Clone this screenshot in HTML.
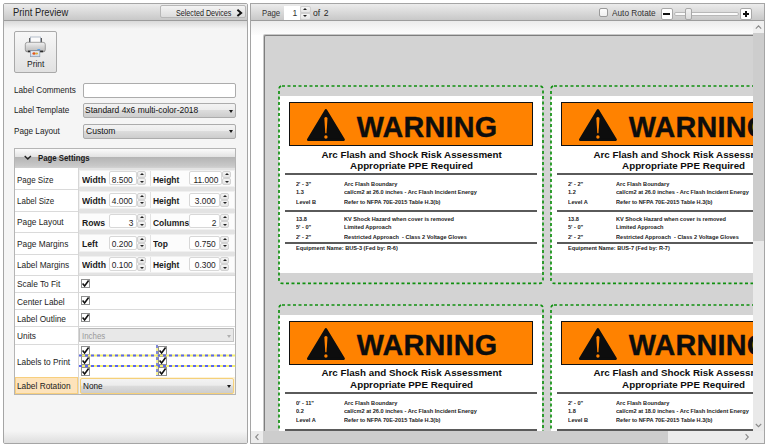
<!DOCTYPE html>
<html><head><meta charset="utf-8">
<style>
*{box-sizing:border-box;margin:0;padding:0}
html,body{width:768px;height:448px;overflow:hidden;background:#fff;font-family:"Liberation Sans",sans-serif;color:#1e1e1e;position:relative}
.a{position:absolute}
.t{position:absolute;white-space:pre;line-height:1}
.combo{position:absolute;border:1px solid #acacac;border-radius:2px;background:linear-gradient(#f3f3f3 0%,#ececec 45%,#dcdcdc 50%,#cdcdcd 100%)}
.arr{position:absolute;width:0;height:0;border-left:2px solid transparent;border-right:2px solid transparent;border-top:3px solid #1a1a1a}
.cb{position:absolute;width:9px;height:9px;border:1px solid #8e8f8f;background:#fff}
.spin{position:absolute;width:9px;border:1px solid #d2d2d2;border-radius:2px;background:linear-gradient(#f4f4f4,#e4e4e4)}
.inp{position:absolute;border:1px solid #d8d8d8;border-radius:2px;background:#fff}
</style></head><body>
<div class="a" style="left:3px;top:3px;width:245px;height:441px;border:1px solid #a5a5a5;border-radius:2px;background:#f5f5f5"></div>
<div class="a" style="left:4px;top:4px;width:243px;height:17px;background:linear-gradient(#ececec,#c8c8c8);border-bottom:1px solid #9c9c9c"></div>
<div class="a" style="left:4px;top:21px;width:243px;height:8px;background:linear-gradient(#d9d9d9,#f5f5f5)"></div>
<div class="a" style="left:4px;top:431px;width:243px;height:12px;background:linear-gradient(#f5f5f5,#dedede)"></div>
<div class="t" style="left:12.90px;top:7.97px;font-size:10.2px;font-weight:normal;color:#222;transform:scaleX(0.92);transform-origin:0 0;">Print Preview</div>
<div class="a" style="left:160px;top:5px;width:86px;height:13px;border:1px solid #b7b7b7;border-radius:2px;background:linear-gradient(#f4f4f4,#dcdcdc)"></div>
<div class="t" style="left:175.60px;top:7.56px;font-size:9.5px;font-weight:normal;color:#1c1c1c;transform:scaleX(0.755);transform-origin:0 0;">Selected Devices</div>
<svg class="a" style="left:235.5px;top:9px" width="7" height="8"><path d="M1.4 0.7 L5.2 3.9 L1.4 7.1" fill="none" stroke="#111" stroke-width="1.9"/></svg>
<div class="a" style="left:14px;top:31px;width:43px;height:42px;border:1px solid #a9a9a9;border-radius:2px;background:linear-gradient(#f7f7f7,#e1e1e1)"></div>
<svg class="a" style="left:22px;top:34px" width="28" height="26" viewBox="0 0 28 26">
<defs><linearGradient id="pb" x1="0" y1="0" x2="0" y2="1"><stop offset="0" stop-color="#f2f2f2"/><stop offset="0.45" stop-color="#d6d6d6"/><stop offset="0.8" stop-color="#c4c4c4"/><stop offset="1" stop-color="#8a8a8a"/></linearGradient>
<linearGradient id="po" x1="0" y1="0" x2="0" y2="1"><stop offset="0" stop-color="#eef3fa"/><stop offset="1" stop-color="#c9d6e8"/></linearGradient></defs>
<rect x="7" y="4" width="13" height="8" fill="#5a5a5a"/>
<rect x="8.3" y="3" width="10.2" height="7" fill="#fbfbfb" stroke="#9aa6b8" stroke-width="0.7"/>
<rect x="3.3" y="8.3" width="20" height="9.6" rx="2.2" fill="url(#pb)" stroke="#7e7e7e" stroke-width="0.7"/>
<rect x="6" y="16.6" width="15" height="1.6" fill="#2a2a2a"/>
<rect x="15.4" y="15.1" width="2.8" height="1" fill="#4f9be6"/>
<rect x="8.4" y="16.8" width="9.4" height="5.9" fill="url(#po)" stroke="#8797ad" stroke-width="0.7"/>
<ellipse cx="12" cy="19.5" rx="1.6" ry="1.2" fill="#e2541c"/><ellipse cx="14.6" cy="19.5" rx="1.5" ry="1.1" fill="#d8b040"/>
</svg>
<div class="t" style="left:26.80px;top:60.31px;font-size:9.2px;font-weight:normal;color:#1c1c1c;transform:scaleX(0.92);transform-origin:0 0;">Print</div>
<div class="t" style="left:13.90px;top:84.96px;font-size:9.5px;font-weight:normal;color:#1c1c1c;transform:scaleX(0.86);transform-origin:0 0;">Label Comments</div>
<div class="a" style="left:83px;top:83px;width:153px;height:15px;border:1px solid #acacac;border-radius:2px;background:#fff"></div>
<div class="t" style="left:13.90px;top:105.46px;font-size:9.5px;font-weight:normal;color:#1c1c1c;transform:scaleX(0.86);transform-origin:0 0;">Label Template</div>
<div class="combo" style="left:83px;top:103px;width:153px;height:15px"></div>
<div class="t" style="left:85.30px;top:105.46px;font-size:9.5px;font-weight:normal;color:#111;transform:scaleX(0.89);transform-origin:0 0;">Standard 4x6 multi-color-2018</div>
<div class="arr" style="left:228.5px;top:109.5px"></div>
<div class="t" style="left:13.90px;top:125.96px;font-size:9.5px;font-weight:normal;color:#1c1c1c;transform:scaleX(0.86);transform-origin:0 0;">Page Layout</div>
<div class="combo" style="left:83px;top:123.5px;width:153px;height:15px"></div>
<div class="t" style="left:85.80px;top:125.96px;font-size:9.5px;font-weight:normal;color:#111;transform:scaleX(0.9);transform-origin:0 0;">Custom</div>
<div class="arr" style="left:228.5px;top:130px"></div>
<div class="a" style="left:14px;top:148px;width:222px;height:247px;border:1px solid #b5b5b5;background:#fff"></div>
<div class="a" style="left:15px;top:149px;width:220px;height:8px;background:linear-gradient(#fbfbfb,#e2e2e2)"></div>
<div class="a" style="left:15px;top:157px;width:220px;height:11px;background:linear-gradient(#b4b4b4,#c8c8c8 80%,#d2d2d2)"></div>
<svg class="a" style="left:24px;top:155px" width="8" height="6"><path d="M0.7 0.9 L3.8 4 L6.9 0.9" fill="none" stroke="#222" stroke-width="1.35"/></svg>
<div class="t" style="left:38.00px;top:152.76px;font-size:9.5px;font-weight:bold;color:#1a1a1a;transform:scaleX(0.82);transform-origin:0 0;">Page Settings</div>
<div class="a" style="left:78px;top:168px;width:1px;height:226px;background:#d6d6d6"></div>
<div class="a" style="left:15px;top:189.0px;width:63px;height:1.0px;background:#dadada"></div>
<div class="a" style="left:15px;top:210.5px;width:63px;height:1.0px;background:#dadada"></div>
<div class="a" style="left:15px;top:232.0px;width:63px;height:1.0px;background:#dadada"></div>
<div class="a" style="left:15px;top:253.5px;width:63px;height:1.0px;background:#dadada"></div>
<div class="a" style="left:15px;top:274.5px;width:63px;height:1.0px;background:#dadada"></div>
<div class="a" style="left:15px;top:291.5px;width:63px;height:1.0px;background:#dadada"></div>
<div class="a" style="left:15px;top:308.5px;width:63px;height:1.0px;background:#dadada"></div>
<div class="a" style="left:15px;top:325.8px;width:63px;height:1.0px;background:#dadada"></div>
<div class="a" style="left:15px;top:343.5px;width:63px;height:1.0px;background:#dadada"></div>
<div class="a" style="left:15px;top:376.5px;width:63px;height:1.0px;background:#dadada"></div>
<div class="t" style="left:17.00px;top:174.66px;font-size:9.5px;font-weight:normal;color:#1c1c1c;transform:scaleX(0.84);transform-origin:0 0;">Page Size</div>
<div class="t" style="left:17.00px;top:195.96px;font-size:9.5px;font-weight:normal;color:#1c1c1c;transform:scaleX(0.84);transform-origin:0 0;">Label Size</div>
<div class="t" style="left:17.00px;top:217.46px;font-size:9.5px;font-weight:normal;color:#1c1c1c;transform:scaleX(0.875);transform-origin:0 0;">Page Layout</div>
<div class="t" style="left:17.00px;top:238.86px;font-size:9.5px;font-weight:normal;color:#1c1c1c;transform:scaleX(0.875);transform-origin:0 0;">Page Margins</div>
<div class="t" style="left:17.00px;top:260.16px;font-size:9.5px;font-weight:normal;color:#1c1c1c;transform:scaleX(0.875);transform-origin:0 0;">Label Margins</div>
<div class="t" style="left:17.00px;top:279.26px;font-size:9.5px;font-weight:normal;color:#1c1c1c;transform:scaleX(0.875);transform-origin:0 0;">Scale To Fit</div>
<div class="t" style="left:17.00px;top:296.56px;font-size:9.5px;font-weight:normal;color:#1c1c1c;transform:scaleX(0.875);transform-origin:0 0;">Center Label</div>
<div class="t" style="left:17.00px;top:313.56px;font-size:9.5px;font-weight:normal;color:#1c1c1c;transform:scaleX(0.875);transform-origin:0 0;">Label Outline</div>
<div class="t" style="left:17.00px;top:331.16px;font-size:9.5px;font-weight:normal;color:#1c1c1c;transform:scaleX(0.875);transform-origin:0 0;">Units</div>
<div class="t" style="left:17.00px;top:356.96px;font-size:9.5px;font-weight:normal;color:#1c1c1c;transform:scaleX(0.875);transform-origin:0 0;">Labels to Print</div>
<div class="t" style="left:17.00px;top:381.56px;font-size:9.5px;font-weight:normal;color:#1c1c1c;transform:scaleX(0.875);transform-origin:0 0;">Label Rotation</div>
<div class="a" style="left:79px;top:168px;width:156px;height:21.5px;background:#e3e3e3"></div>
<div class="a" style="left:79px;top:169.5px;width:156px;height:17.5px;background:#fcfcfc;border:1px solid #f0f0f0"></div>
<div class="a" style="left:150px;top:170.5px;width:1px;height:15.5px;background:#e2e2e2"></div>
<div class="t" style="left:82.00px;top:174.76px;font-size:9.5px;font-weight:bold;color:#1a1a1a;transform:scaleX(0.91);transform-origin:0 0;">Width</div>
<div class="t" style="left:153.20px;top:174.76px;font-size:9.5px;font-weight:bold;color:#1a1a1a;transform:scaleX(0.89);transform-origin:0 0;">Height</div>
<div class="inp" style="left:108.5px;top:171.2px;width:28.5px;height:14.0px"></div>
<div class="t" style="right:634.80px;top:174.76px;font-size:9.5px;font-weight:normal;color:#1c1c1c;transform:scaleX(0.88);transform-origin:100% 0;">8.500</div>
<div class="inp" style="left:188.5px;top:171.2px;width:33.0px;height:14.0px"></div>
<div class="t" style="right:550.10px;top:174.76px;font-size:9.5px;font-weight:normal;color:#1c1c1c;transform:scaleX(0.88);transform-origin:100% 0;">11.000</div>
<div class="spin" style="left:137px;top:171.2px;height:7.0px"></div>
<div class="spin" style="left:137px;top:178.2px;height:7.0px"></div>
<div class="arr" style="left:139.5px;top:173.39999999999998px;border-top:none;border-bottom:2px solid #222"></div>
<div class="arr" style="left:139.5px;top:180.79999999999998px;border-top:2px solid #222"></div>
<div class="spin" style="left:222.0px;top:171.2px;height:7.0px"></div>
<div class="spin" style="left:222.0px;top:178.2px;height:7.0px"></div>
<div class="arr" style="left:224.5px;top:173.39999999999998px;border-top:none;border-bottom:2px solid #222"></div>
<div class="arr" style="left:224.5px;top:180.79999999999998px;border-top:2px solid #222"></div>
<div class="a" style="left:79px;top:189.5px;width:156px;height:21.5px;background:#e3e3e3"></div>
<div class="a" style="left:79px;top:191.0px;width:156px;height:17.5px;background:#fcfcfc;border:1px solid #f0f0f0"></div>
<div class="a" style="left:150px;top:192.0px;width:1px;height:15.5px;background:#e2e2e2"></div>
<div class="t" style="left:82.00px;top:196.06px;font-size:9.5px;font-weight:bold;color:#1a1a1a;transform:scaleX(0.91);transform-origin:0 0;">Width</div>
<div class="t" style="left:153.20px;top:196.06px;font-size:9.5px;font-weight:bold;color:#1a1a1a;transform:scaleX(0.89);transform-origin:0 0;">Height</div>
<div class="inp" style="left:108.5px;top:192.7px;width:28.5px;height:14.0px"></div>
<div class="t" style="right:634.80px;top:196.06px;font-size:9.5px;font-weight:normal;color:#1c1c1c;transform:scaleX(0.88);transform-origin:100% 0;">4.000</div>
<div class="inp" style="left:188.5px;top:192.7px;width:31.0px;height:14.0px"></div>
<div class="t" style="right:552.10px;top:196.06px;font-size:9.5px;font-weight:normal;color:#1c1c1c;transform:scaleX(0.88);transform-origin:100% 0;">3.000</div>
<div class="spin" style="left:137px;top:192.7px;height:7.0px"></div>
<div class="spin" style="left:137px;top:199.7px;height:7.0px"></div>
<div class="arr" style="left:139.5px;top:194.89999999999998px;border-top:none;border-bottom:2px solid #222"></div>
<div class="arr" style="left:139.5px;top:202.29999999999998px;border-top:2px solid #222"></div>
<div class="spin" style="left:220.0px;top:192.7px;height:7.0px"></div>
<div class="spin" style="left:220.0px;top:199.7px;height:7.0px"></div>
<div class="arr" style="left:222.5px;top:194.89999999999998px;border-top:none;border-bottom:2px solid #222"></div>
<div class="arr" style="left:222.5px;top:202.29999999999998px;border-top:2px solid #222"></div>
<div class="a" style="left:79px;top:211px;width:156px;height:21.5px;background:#e3e3e3"></div>
<div class="a" style="left:79px;top:212.5px;width:156px;height:17.5px;background:#fcfcfc;border:1px solid #f0f0f0"></div>
<div class="a" style="left:150px;top:213.5px;width:1px;height:15.5px;background:#e2e2e2"></div>
<div class="t" style="left:82.00px;top:217.56px;font-size:9.5px;font-weight:bold;color:#1a1a1a;transform:scaleX(0.91);transform-origin:0 0;">Rows</div>
<div class="t" style="left:153.20px;top:217.56px;font-size:9.5px;font-weight:bold;color:#1a1a1a;transform:scaleX(0.89);transform-origin:0 0;">Columns</div>
<div class="inp" style="left:108.5px;top:214.2px;width:28.5px;height:14.0px"></div>
<div class="t" style="right:634.80px;top:217.56px;font-size:9.5px;font-weight:normal;color:#1c1c1c;transform:scaleX(0.88);transform-origin:100% 0;">3</div>
<div class="inp" style="left:188.5px;top:214.2px;width:31.0px;height:14.0px"></div>
<div class="t" style="right:552.10px;top:217.56px;font-size:9.5px;font-weight:normal;color:#1c1c1c;transform:scaleX(0.88);transform-origin:100% 0;">2</div>
<div class="spin" style="left:137px;top:214.2px;height:7.0px"></div>
<div class="spin" style="left:137px;top:221.2px;height:7.0px"></div>
<div class="arr" style="left:139.5px;top:216.39999999999998px;border-top:none;border-bottom:2px solid #222"></div>
<div class="arr" style="left:139.5px;top:223.79999999999998px;border-top:2px solid #222"></div>
<div class="spin" style="left:220.0px;top:214.2px;height:7.0px"></div>
<div class="spin" style="left:220.0px;top:221.2px;height:7.0px"></div>
<div class="arr" style="left:222.5px;top:216.39999999999998px;border-top:none;border-bottom:2px solid #222"></div>
<div class="arr" style="left:222.5px;top:223.79999999999998px;border-top:2px solid #222"></div>
<div class="a" style="left:79px;top:232.5px;width:156px;height:21.5px;background:#e3e3e3"></div>
<div class="a" style="left:79px;top:234.0px;width:156px;height:17.5px;background:#fcfcfc;border:1px solid #f0f0f0"></div>
<div class="a" style="left:150px;top:235.0px;width:1px;height:15.5px;background:#e2e2e2"></div>
<div class="t" style="left:82.00px;top:238.96px;font-size:9.5px;font-weight:bold;color:#1a1a1a;transform:scaleX(0.91);transform-origin:0 0;">Left</div>
<div class="t" style="left:153.20px;top:238.96px;font-size:9.5px;font-weight:bold;color:#1a1a1a;transform:scaleX(0.89);transform-origin:0 0;">Top</div>
<div class="inp" style="left:108.5px;top:235.7px;width:28.5px;height:14.0px"></div>
<div class="t" style="right:634.80px;top:238.96px;font-size:9.5px;font-weight:normal;color:#1c1c1c;transform:scaleX(0.88);transform-origin:100% 0;">0.200</div>
<div class="inp" style="left:188.5px;top:235.7px;width:31.0px;height:14.0px"></div>
<div class="t" style="right:552.10px;top:238.96px;font-size:9.5px;font-weight:normal;color:#1c1c1c;transform:scaleX(0.88);transform-origin:100% 0;">0.750</div>
<div class="spin" style="left:137px;top:235.7px;height:7.0px"></div>
<div class="spin" style="left:137px;top:242.7px;height:7.0px"></div>
<div class="arr" style="left:139.5px;top:237.89999999999998px;border-top:none;border-bottom:2px solid #222"></div>
<div class="arr" style="left:139.5px;top:245.29999999999998px;border-top:2px solid #222"></div>
<div class="spin" style="left:220.0px;top:235.7px;height:7.0px"></div>
<div class="spin" style="left:220.0px;top:242.7px;height:7.0px"></div>
<div class="arr" style="left:222.5px;top:237.89999999999998px;border-top:none;border-bottom:2px solid #222"></div>
<div class="arr" style="left:222.5px;top:245.29999999999998px;border-top:2px solid #222"></div>
<div class="a" style="left:79px;top:254px;width:156px;height:21px;background:#e3e3e3"></div>
<div class="a" style="left:79px;top:255.5px;width:156px;height:17.0px;background:#fcfcfc;border:1px solid #f0f0f0"></div>
<div class="a" style="left:150px;top:256.5px;width:1px;height:15.0px;background:#e2e2e2"></div>
<div class="t" style="left:82.00px;top:260.26px;font-size:9.5px;font-weight:bold;color:#1a1a1a;transform:scaleX(0.91);transform-origin:0 0;">Width</div>
<div class="t" style="left:153.20px;top:260.26px;font-size:9.5px;font-weight:bold;color:#1a1a1a;transform:scaleX(0.89);transform-origin:0 0;">Height</div>
<div class="inp" style="left:108.5px;top:257.2px;width:28.5px;height:13.5px"></div>
<div class="t" style="right:634.80px;top:260.26px;font-size:9.5px;font-weight:normal;color:#1c1c1c;transform:scaleX(0.88);transform-origin:100% 0;">0.100</div>
<div class="inp" style="left:188.5px;top:257.2px;width:31.0px;height:13.5px"></div>
<div class="t" style="right:552.10px;top:260.26px;font-size:9.5px;font-weight:normal;color:#1c1c1c;transform:scaleX(0.88);transform-origin:100% 0;">0.300</div>
<div class="spin" style="left:137px;top:257.2px;height:6.75px"></div>
<div class="spin" style="left:137px;top:263.95px;height:6.75px"></div>
<div class="arr" style="left:139.5px;top:259.4px;border-top:none;border-bottom:2px solid #222"></div>
<div class="arr" style="left:139.5px;top:266.55px;border-top:2px solid #222"></div>
<div class="spin" style="left:220.0px;top:257.2px;height:6.75px"></div>
<div class="spin" style="left:220.0px;top:263.95px;height:6.75px"></div>
<div class="arr" style="left:222.5px;top:259.4px;border-top:none;border-bottom:2px solid #222"></div>
<div class="arr" style="left:222.5px;top:266.55px;border-top:2px solid #222"></div>
<div class="a" style="left:79px;top:274.5px;width:156px;height:1.0px;background:#dadada"></div>
<div class="cb" style="left:81px;top:279px"></div>
<svg class="a" style="left:81px;top:279px" width="9" height="9"><path d="M1.6 4.6 L3.6 7 L7.6 1.6" fill="none" stroke="#111" stroke-width="1.6"/></svg>
<div class="a" style="left:79px;top:291.5px;width:156px;height:1.0px;background:#dadada"></div>
<div class="cb" style="left:81px;top:296px"></div>
<svg class="a" style="left:81px;top:296px" width="9" height="9"><path d="M1.6 4.6 L3.6 7 L7.6 1.6" fill="none" stroke="#111" stroke-width="1.6"/></svg>
<div class="a" style="left:79px;top:308.5px;width:156px;height:1.0px;background:#dadada"></div>
<div class="cb" style="left:81px;top:313px"></div>
<svg class="a" style="left:81px;top:313px" width="9" height="9"><path d="M1.6 4.6 L3.6 7 L7.6 1.6" fill="none" stroke="#111" stroke-width="1.6"/></svg>
<div class="a" style="left:79px;top:325.8px;width:156px;height:1.0px;background:#dadada"></div>
<div class="a" style="left:79px;top:327.6px;width:155px;height:14.899999999999977px;border:1px solid #c2c2c2;border-top-color:#b8b8b8;border-radius:1px;background:#e8e8e8"></div>
<div class="t" style="left:81.80px;top:330.96px;font-size:9.5px;font-weight:normal;color:#9a9a9a;transform:scaleX(0.83);transform-origin:0 0;">Inches</div>
<div class="arr" style="left:227px;top:335px;border-top-color:#b0b0b0"></div>
<div class="a" style="left:79px;top:343.5px;width:156px;height:1.5px;background:#dedede"></div>
<div class="cb" style="left:80.5px;top:345.6px"></div>
<svg class="a" style="left:80.5px;top:345.6px" width="9" height="9"><path d="M1.6 4.6 L3.6 7 L7.6 1.6" fill="none" stroke="#111" stroke-width="1.6"/></svg>
<div class="cb" style="left:80.5px;top:356.1px"></div>
<svg class="a" style="left:80.5px;top:356.1px" width="9" height="9"><path d="M1.6 4.6 L3.6 7 L7.6 1.6" fill="none" stroke="#111" stroke-width="1.6"/></svg>
<div class="cb" style="left:80.5px;top:366.7px"></div>
<svg class="a" style="left:80.5px;top:366.7px" width="9" height="9"><path d="M1.6 4.6 L3.6 7 L7.6 1.6" fill="none" stroke="#111" stroke-width="1.6"/></svg>
<div class="cb" style="left:157.6px;top:345.6px"></div>
<svg class="a" style="left:157.6px;top:345.6px" width="9" height="9"><path d="M1.6 4.6 L3.6 7 L7.6 1.6" fill="none" stroke="#111" stroke-width="1.6"/></svg>
<div class="cb" style="left:157.6px;top:356.1px"></div>
<svg class="a" style="left:157.6px;top:356.1px" width="9" height="9"><path d="M1.6 4.6 L3.6 7 L7.6 1.6" fill="none" stroke="#111" stroke-width="1.6"/></svg>
<div class="cb" style="left:157.6px;top:366.7px"></div>
<svg class="a" style="left:157.6px;top:366.7px" width="9" height="9"><path d="M1.6 4.6 L3.6 7 L7.6 1.6" fill="none" stroke="#111" stroke-width="1.6"/></svg>
<svg class="a" style="left:79px;top:344px" width="156" height="33"><path d="M0 11.4 H156 M0 21.9 H156" stroke="#f2ee70" stroke-width="2"/><path d="M0 11.4 H156 M0 21.9 H156" stroke="#5a66f0" stroke-width="2" stroke-dasharray="3 3"/><path d="M78 1 V32" stroke="#f2ee70" stroke-width="1.5"/><path d="M78 1 V32" stroke="#5a66f0" stroke-width="1.5" stroke-dasharray="3 3"/></svg>
<div class="a" style="left:15px;top:377px;width:63px;height:17px;background:#fde3bb;border:1px solid #f7cf7e"></div>
<div class="a" style="left:79px;top:377px;width:156px;height:17px;background:#fdf3d9"></div>
<div class="combo" style="left:79.5px;top:378px;width:154.5px;height:15.5px;border-color:#f5d07a"></div>
<div class="t" style="left:17.00px;top:381.26px;font-size:9.5px;font-weight:normal;color:#1c1c1c;transform:scaleX(0.875);transform-origin:0 0;">Label Rotation</div>
<div class="t" style="left:82.50px;top:381.26px;font-size:9.5px;font-weight:normal;color:#111;transform:scaleX(0.86);transform-origin:0 0;">None</div>
<div class="arr" style="left:227px;top:385px"></div>
<div class="a" style="left:250px;top:3px;width:515px;height:441px;border:1px solid #a5a5a5;background:#fff"></div>
<div class="a" style="left:251px;top:4px;width:513px;height:17px;background:linear-gradient(#ececec,#c8c8c8);border-bottom:1px solid #9c9c9c"></div>
<div class="t" style="left:262.30px;top:7.96px;font-size:9.5px;font-weight:normal;color:#333;transform:scaleX(0.82);transform-origin:0 0;">Page</div>
<div class="a" style="left:283.7px;top:6.2px;width:16.30000000000001px;height:13.8px;background:#fff"></div>
<div class="t" style="right:471.00px;top:7.96px;font-size:9.5px;font-weight:normal;color:#333;transform:scaleX(0.9);transform-origin:100% 0;">1</div>
<div class="a" style="left:300px;top:6.2px;width:10.5px;height:6.8px;border:1px solid #d0d0d0;border-radius:2px;background:linear-gradient(#f6f6f6,#e6e6e6)"></div>
<div class="arr" style="left:303px;top:8.4px;border-top:none;border-bottom:2px solid #222"></div>
<div class="a" style="left:300px;top:13px;width:10.5px;height:7px;border:1px solid #d0d0d0;border-radius:2px;background:linear-gradient(#f6f6f6,#e6e6e6)"></div>
<div class="arr" style="left:303px;top:15.4px;border-top:2px solid #222"></div>
<div class="t" style="left:313.00px;top:7.96px;font-size:9.5px;font-weight:normal;color:#222;transform:scaleX(0.9);transform-origin:0 0;word-spacing:1.5px">of 2</div>
<div class="a" style="left:598.7px;top:8px;width:9.799999999999955px;height:9.3px;border:1px solid #9a9a9a;border-radius:2px;background:linear-gradient(#fdfdfd,#f0f0f0)"></div>
<div class="t" style="left:611.50px;top:7.96px;font-size:9.5px;font-weight:normal;color:#333;transform:scaleX(0.87);transform-origin:0 0;">Auto Rotate</div>
<div class="a" style="left:660.5px;top:7.5px;width:12.0px;height:12.5px;border:1px solid #a8a8a8;border-radius:2px;background:#fff"></div>
<div class="a" style="left:663px;top:13.2px;width:7px;height:1.6000000000000014px;background:#111"></div>
<div class="a" style="left:674px;top:11.8px;width:64.5px;height:4.0px;border:1px solid #b8b8b8;border-radius:2px;background:#fafafa"></div>
<div class="a" style="left:684.5px;top:7.5px;width:7.0px;height:12.5px;border:1px solid #a8a8a8;border-radius:2px;background:linear-gradient(#f2f2f2,#dcdcdc)"></div>
<div class="a" style="left:740px;top:7.7px;width:12px;height:12.3px;border:1px solid #a8a8a8;border-radius:2px;background:#fff"></div>
<div class="a" style="left:742.6px;top:13.2px;width:6.7999999999999545px;height:1.6000000000000014px;background:#111"></div>
<div class="a" style="left:745.2px;top:10.6px;width:1.599999999999909px;height:6.799999999999999px;background:#111"></div>
<div class="a" style="left:251px;top:21px;width:502px;height:410px;overflow:hidden;background:#fff">
<div class="a" style="left:0;top:0;width:502px;height:14px;background:linear-gradient(#ebebeb,#f6f6f6 50%,#fdfdfd)"></div>
<div class="a" style="left:13px;top:14px;width:560px;height:740px;background:#d3d3d3;border-left:1px solid #7d7d7d;border-top:1px solid #7d7d7d;border-radius:2px 0 0 0;box-shadow:-1px -1px 0 #c8c8c8"></div>
<div class="a" style="left:28.100000000000023px;top:65.25px;width:270px;height:200px">
<div class="a" style="left:0;top:10px;width:263px;height:176.85px;background:#fff"></div>
<svg class="a" style="left:-2px;top:-2px;overflow:visible" width="268" height="202"><rect x="2" y="2" width="264" height="197.3" rx="3" fill="none" stroke="#109010" stroke-width="1.7" stroke-dasharray="3 2.5"/></svg>
<div class="a" style="left:10.25px;top:15.75px;width:243.25px;height:43.75px;background:#ff8200;border:1.9px solid #111"></div>
<svg class="a" style="left:26px;top:21px" width="42" height="36" viewBox="0 0 42 36"><path d="M20.9 3.3 L38.6 32.7 L3.3 32.7 Z" fill="#0d0d0d" stroke="#0d0d0d" stroke-width="2.6" stroke-linejoin="round"/><path d="M19.3 10.9 Q20.9 8.9 22.5 10.9 L21.5 26.2 L20.3 26.2 Z" fill="#ff8200"/><circle cx="20.9" cy="30" r="1.7" fill="#ff8200"/></svg>
<div class="t" style="left:77.6px;top:26.42px;font-size:28.8px;font-weight:bold;color:#0d0d0d;letter-spacing:0.22px;-webkit-text-stroke:0.35px #0d0d0d;transform-origin:0 0">WARNING</div>
<div class="t" style="left:1px;width:263px;text-align:center;top:63.35px;font-size:9.8px;font-weight:bold;color:#0d0d0d">Arc Flash and Shock Risk Assessment</div>
<div class="t" style="left:1px;width:263px;text-align:center;top:74.95px;font-size:9.8px;font-weight:bold;color:#0d0d0d">Appropriate PPE Required</div>
<div class="a" style="left:6.25px;top:86.75px;width:252px;height:2px;background:#5a5a5a"></div>
<div class="a" style="left:6.25px;top:123.75px;width:252px;height:2px;background:#5a5a5a"></div>
<div class="a" style="left:6.25px;top:155.75px;width:252px;height:2px;background:#5a5a5a"></div>
<div class="t" style="left:16.5px;top:94.59px;font-size:6.1px;font-weight:bold;color:#1a1a1a;transform:scaleX(0.92);transform-origin:0 0">2' - 3"</div>
<div class="t" style="left:65.4px;top:94.59px;font-size:6.1px;font-weight:bold;color:#1a1a1a;transform:scaleX(0.92);transform-origin:0 0">Arc Flash Boundary</div>
<div class="t" style="left:16.5px;top:103.19px;font-size:6.1px;font-weight:bold;color:#1a1a1a;transform:scaleX(0.92);transform-origin:0 0">1.3</div>
<div class="t" style="left:65.4px;top:103.19px;font-size:6.1px;font-weight:bold;color:#1a1a1a;transform:scaleX(0.92);transform-origin:0 0">cal/cm2 at 26.0 inches - Arc Flash Incident Energy</div>
<div class="t" style="left:16.5px;top:112.39px;font-size:6.1px;font-weight:bold;color:#1a1a1a;transform:scaleX(0.92);transform-origin:0 0">Level B</div>
<div class="t" style="left:65.4px;top:112.39px;font-size:6.1px;font-weight:bold;color:#1a1a1a;transform:scaleX(0.92);transform-origin:0 0">Refer to NFPA 70E-2015 Table H.3(b)</div>
<div class="t" style="left:16.5px;top:129.29px;font-size:6.1px;font-weight:bold;color:#1a1a1a;transform:scaleX(0.92);transform-origin:0 0">13.8</div>
<div class="t" style="left:65.4px;top:129.29px;font-size:6.1px;font-weight:bold;color:#1a1a1a;transform:scaleX(0.92);transform-origin:0 0">KV Shock Hazard when cover is removed</div>
<div class="t" style="left:16.5px;top:138.19px;font-size:6.1px;font-weight:bold;color:#1a1a1a;transform:scaleX(0.92);transform-origin:0 0">5' - 0"</div>
<div class="t" style="left:65.4px;top:138.19px;font-size:6.1px;font-weight:bold;color:#1a1a1a;transform:scaleX(0.92);transform-origin:0 0">Limited Approach</div>
<div class="t" style="left:16.5px;top:147.84px;font-size:6.1px;font-weight:bold;color:#1a1a1a;transform:scaleX(0.92);transform-origin:0 0">2' - 2"</div>
<div class="t" style="left:65.4px;top:147.84px;font-size:6.1px;font-weight:bold;color:#1a1a1a;transform:scaleX(0.92);transform-origin:0 0">Restricted Approach  - Class 2 Voltage Gloves</div>
<div class="t" style="left:16.5px;top:159.09px;font-size:6.1px;font-weight:bold;color:#1a1a1a;transform:scaleX(0.92);transform-origin:0 0">Equipment Name: BUS-3 (Fed by: R-6)</div>
</div>
<div class="a" style="left:300.1px;top:65.25px;width:270px;height:200px">
<div class="a" style="left:0;top:10px;width:263px;height:176.85px;background:#fff"></div>
<svg class="a" style="left:-2px;top:-2px;overflow:visible" width="268" height="202"><rect x="2" y="2" width="264" height="197.3" rx="3" fill="none" stroke="#109010" stroke-width="1.7" stroke-dasharray="3 2.5"/></svg>
<div class="a" style="left:10.25px;top:15.75px;width:243.25px;height:43.75px;background:#ff8200;border:1.9px solid #111"></div>
<svg class="a" style="left:26px;top:21px" width="42" height="36" viewBox="0 0 42 36"><path d="M20.9 3.3 L38.6 32.7 L3.3 32.7 Z" fill="#0d0d0d" stroke="#0d0d0d" stroke-width="2.6" stroke-linejoin="round"/><path d="M19.3 10.9 Q20.9 8.9 22.5 10.9 L21.5 26.2 L20.3 26.2 Z" fill="#ff8200"/><circle cx="20.9" cy="30" r="1.7" fill="#ff8200"/></svg>
<div class="t" style="left:77.6px;top:26.42px;font-size:28.8px;font-weight:bold;color:#0d0d0d;letter-spacing:0.22px;-webkit-text-stroke:0.35px #0d0d0d;transform-origin:0 0">WARNING</div>
<div class="t" style="left:1px;width:263px;text-align:center;top:63.35px;font-size:9.8px;font-weight:bold;color:#0d0d0d">Arc Flash and Shock Risk Assessment</div>
<div class="t" style="left:1px;width:263px;text-align:center;top:74.95px;font-size:9.8px;font-weight:bold;color:#0d0d0d">Appropriate PPE Required</div>
<div class="a" style="left:6.25px;top:86.75px;width:252px;height:2px;background:#5a5a5a"></div>
<div class="a" style="left:6.25px;top:123.75px;width:252px;height:2px;background:#5a5a5a"></div>
<div class="a" style="left:6.25px;top:155.75px;width:252px;height:2px;background:#5a5a5a"></div>
<div class="t" style="left:16.5px;top:94.59px;font-size:6.1px;font-weight:bold;color:#1a1a1a;transform:scaleX(0.92);transform-origin:0 0">2' - 2"</div>
<div class="t" style="left:65.4px;top:94.59px;font-size:6.1px;font-weight:bold;color:#1a1a1a;transform:scaleX(0.92);transform-origin:0 0">Arc Flash Boundary</div>
<div class="t" style="left:16.5px;top:103.19px;font-size:6.1px;font-weight:bold;color:#1a1a1a;transform:scaleX(0.92);transform-origin:0 0">1.2</div>
<div class="t" style="left:65.4px;top:103.19px;font-size:6.1px;font-weight:bold;color:#1a1a1a;transform:scaleX(0.92);transform-origin:0 0">cal/cm2 at 26.0 inches - Arc Flash Incident Energy</div>
<div class="t" style="left:16.5px;top:112.39px;font-size:6.1px;font-weight:bold;color:#1a1a1a;transform:scaleX(0.92);transform-origin:0 0">Level A</div>
<div class="t" style="left:65.4px;top:112.39px;font-size:6.1px;font-weight:bold;color:#1a1a1a;transform:scaleX(0.92);transform-origin:0 0">Refer to NFPA 70E-2015 Table H.3(b)</div>
<div class="t" style="left:16.5px;top:129.29px;font-size:6.1px;font-weight:bold;color:#1a1a1a;transform:scaleX(0.92);transform-origin:0 0">13.8</div>
<div class="t" style="left:65.4px;top:129.29px;font-size:6.1px;font-weight:bold;color:#1a1a1a;transform:scaleX(0.92);transform-origin:0 0">KV Shock Hazard when cover is removed</div>
<div class="t" style="left:16.5px;top:138.19px;font-size:6.1px;font-weight:bold;color:#1a1a1a;transform:scaleX(0.92);transform-origin:0 0">5' - 0"</div>
<div class="t" style="left:65.4px;top:138.19px;font-size:6.1px;font-weight:bold;color:#1a1a1a;transform:scaleX(0.92);transform-origin:0 0">Limited Approach</div>
<div class="t" style="left:16.5px;top:147.84px;font-size:6.1px;font-weight:bold;color:#1a1a1a;transform:scaleX(0.92);transform-origin:0 0">2' - 2"</div>
<div class="t" style="left:65.4px;top:147.84px;font-size:6.1px;font-weight:bold;color:#1a1a1a;transform:scaleX(0.92);transform-origin:0 0">Restricted Approach  - Class 2 Voltage Gloves</div>
<div class="t" style="left:16.5px;top:159.09px;font-size:6.1px;font-weight:bold;color:#1a1a1a;transform:scaleX(0.92);transform-origin:0 0">Equipment Name: BUS-7 (Fed by: R-7)</div>
</div>
<div class="a" style="left:28.100000000000023px;top:284px;width:270px;height:200px">
<div class="a" style="left:0;top:10px;width:263px;height:176.85px;background:#fff"></div>
<svg class="a" style="left:-2px;top:-2px;overflow:visible" width="268" height="202"><rect x="2" y="2" width="264" height="197.3" rx="3" fill="none" stroke="#109010" stroke-width="1.7" stroke-dasharray="3 2.5"/></svg>
<div class="a" style="left:10.25px;top:15.75px;width:243.25px;height:43.75px;background:#ff8200;border:1.9px solid #111"></div>
<svg class="a" style="left:26px;top:21px" width="42" height="36" viewBox="0 0 42 36"><path d="M20.9 3.3 L38.6 32.7 L3.3 32.7 Z" fill="#0d0d0d" stroke="#0d0d0d" stroke-width="2.6" stroke-linejoin="round"/><path d="M19.3 10.9 Q20.9 8.9 22.5 10.9 L21.5 26.2 L20.3 26.2 Z" fill="#ff8200"/><circle cx="20.9" cy="30" r="1.7" fill="#ff8200"/></svg>
<div class="t" style="left:77.6px;top:26.42px;font-size:28.8px;font-weight:bold;color:#0d0d0d;letter-spacing:0.22px;-webkit-text-stroke:0.35px #0d0d0d;transform-origin:0 0">WARNING</div>
<div class="t" style="left:1px;width:263px;text-align:center;top:63.35px;font-size:9.8px;font-weight:bold;color:#0d0d0d">Arc Flash and Shock Risk Assessment</div>
<div class="t" style="left:1px;width:263px;text-align:center;top:74.95px;font-size:9.8px;font-weight:bold;color:#0d0d0d">Appropriate PPE Required</div>
<div class="a" style="left:6.25px;top:86.75px;width:252px;height:2px;background:#5a5a5a"></div>
<div class="a" style="left:6.25px;top:123.75px;width:252px;height:2px;background:#5a5a5a"></div>
<div class="a" style="left:6.25px;top:155.75px;width:252px;height:2px;background:#5a5a5a"></div>
<div class="t" style="left:16.5px;top:94.59px;font-size:6.1px;font-weight:bold;color:#1a1a1a;transform:scaleX(0.92);transform-origin:0 0">0' - 11"</div>
<div class="t" style="left:65.4px;top:94.59px;font-size:6.1px;font-weight:bold;color:#1a1a1a;transform:scaleX(0.92);transform-origin:0 0">Arc Flash Boundary</div>
<div class="t" style="left:16.5px;top:103.19px;font-size:6.1px;font-weight:bold;color:#1a1a1a;transform:scaleX(0.92);transform-origin:0 0">0.2</div>
<div class="t" style="left:65.4px;top:103.19px;font-size:6.1px;font-weight:bold;color:#1a1a1a;transform:scaleX(0.92);transform-origin:0 0">cal/cm2 at 26.0 inches - Arc Flash Incident Energy</div>
<div class="t" style="left:16.5px;top:112.39px;font-size:6.1px;font-weight:bold;color:#1a1a1a;transform:scaleX(0.92);transform-origin:0 0">Level A</div>
<div class="t" style="left:65.4px;top:112.39px;font-size:6.1px;font-weight:bold;color:#1a1a1a;transform:scaleX(0.92);transform-origin:0 0">Refer to NFPA 70E-2015 Table H.3(b)</div>
<div class="t" style="left:16.5px;top:129.29px;font-size:6.1px;font-weight:bold;color:#1a1a1a;transform:scaleX(0.92);transform-origin:0 0">13.8</div>
<div class="t" style="left:65.4px;top:129.29px;font-size:6.1px;font-weight:bold;color:#1a1a1a;transform:scaleX(0.92);transform-origin:0 0">KV Shock Hazard when cover is removed</div>
<div class="t" style="left:16.5px;top:138.19px;font-size:6.1px;font-weight:bold;color:#1a1a1a;transform:scaleX(0.92);transform-origin:0 0">5' - 0"</div>
<div class="t" style="left:65.4px;top:138.19px;font-size:6.1px;font-weight:bold;color:#1a1a1a;transform:scaleX(0.92);transform-origin:0 0">Limited Approach</div>
<div class="t" style="left:16.5px;top:147.84px;font-size:6.1px;font-weight:bold;color:#1a1a1a;transform:scaleX(0.92);transform-origin:0 0">2' - 2"</div>
<div class="t" style="left:65.4px;top:147.84px;font-size:6.1px;font-weight:bold;color:#1a1a1a;transform:scaleX(0.92);transform-origin:0 0">Restricted Approach  - Class 2 Voltage Gloves</div>
<div class="t" style="left:16.5px;top:159.09px;font-size:6.1px;font-weight:bold;color:#1a1a1a;transform:scaleX(0.92);transform-origin:0 0">Equipment Name: BUS-4 (Fed by: R-6)</div>
</div>
<div class="a" style="left:300.1px;top:284px;width:270px;height:200px">
<div class="a" style="left:0;top:10px;width:263px;height:176.85px;background:#fff"></div>
<svg class="a" style="left:-2px;top:-2px;overflow:visible" width="268" height="202"><rect x="2" y="2" width="264" height="197.3" rx="3" fill="none" stroke="#109010" stroke-width="1.7" stroke-dasharray="3 2.5"/></svg>
<div class="a" style="left:10.25px;top:15.75px;width:243.25px;height:43.75px;background:#ff8200;border:1.9px solid #111"></div>
<svg class="a" style="left:26px;top:21px" width="42" height="36" viewBox="0 0 42 36"><path d="M20.9 3.3 L38.6 32.7 L3.3 32.7 Z" fill="#0d0d0d" stroke="#0d0d0d" stroke-width="2.6" stroke-linejoin="round"/><path d="M19.3 10.9 Q20.9 8.9 22.5 10.9 L21.5 26.2 L20.3 26.2 Z" fill="#ff8200"/><circle cx="20.9" cy="30" r="1.7" fill="#ff8200"/></svg>
<div class="t" style="left:77.6px;top:26.42px;font-size:28.8px;font-weight:bold;color:#0d0d0d;letter-spacing:0.22px;-webkit-text-stroke:0.35px #0d0d0d;transform-origin:0 0">WARNING</div>
<div class="t" style="left:1px;width:263px;text-align:center;top:63.35px;font-size:9.8px;font-weight:bold;color:#0d0d0d">Arc Flash and Shock Risk Assessment</div>
<div class="t" style="left:1px;width:263px;text-align:center;top:74.95px;font-size:9.8px;font-weight:bold;color:#0d0d0d">Appropriate PPE Required</div>
<div class="a" style="left:6.25px;top:86.75px;width:252px;height:2px;background:#5a5a5a"></div>
<div class="a" style="left:6.25px;top:123.75px;width:252px;height:2px;background:#5a5a5a"></div>
<div class="a" style="left:6.25px;top:155.75px;width:252px;height:2px;background:#5a5a5a"></div>
<div class="t" style="left:16.5px;top:94.59px;font-size:6.1px;font-weight:bold;color:#1a1a1a;transform:scaleX(0.92);transform-origin:0 0">2' - 0"</div>
<div class="t" style="left:65.4px;top:94.59px;font-size:6.1px;font-weight:bold;color:#1a1a1a;transform:scaleX(0.92);transform-origin:0 0">Arc Flash Boundary</div>
<div class="t" style="left:16.5px;top:103.19px;font-size:6.1px;font-weight:bold;color:#1a1a1a;transform:scaleX(0.92);transform-origin:0 0">1.8</div>
<div class="t" style="left:65.4px;top:103.19px;font-size:6.1px;font-weight:bold;color:#1a1a1a;transform:scaleX(0.92);transform-origin:0 0">cal/cm2 at 18.0 inches - Arc Flash Incident Energy</div>
<div class="t" style="left:16.5px;top:112.39px;font-size:6.1px;font-weight:bold;color:#1a1a1a;transform:scaleX(0.92);transform-origin:0 0">Level B</div>
<div class="t" style="left:65.4px;top:112.39px;font-size:6.1px;font-weight:bold;color:#1a1a1a;transform:scaleX(0.92);transform-origin:0 0">Refer to NFPA 70E-2015 Table H.3(b)</div>
<div class="t" style="left:16.5px;top:129.29px;font-size:6.1px;font-weight:bold;color:#1a1a1a;transform:scaleX(0.92);transform-origin:0 0">13.8</div>
<div class="t" style="left:65.4px;top:129.29px;font-size:6.1px;font-weight:bold;color:#1a1a1a;transform:scaleX(0.92);transform-origin:0 0">KV Shock Hazard when cover is removed</div>
<div class="t" style="left:16.5px;top:138.19px;font-size:6.1px;font-weight:bold;color:#1a1a1a;transform:scaleX(0.92);transform-origin:0 0">5' - 0"</div>
<div class="t" style="left:65.4px;top:138.19px;font-size:6.1px;font-weight:bold;color:#1a1a1a;transform:scaleX(0.92);transform-origin:0 0">Limited Approach</div>
<div class="t" style="left:16.5px;top:147.84px;font-size:6.1px;font-weight:bold;color:#1a1a1a;transform:scaleX(0.92);transform-origin:0 0">2' - 2"</div>
<div class="t" style="left:65.4px;top:147.84px;font-size:6.1px;font-weight:bold;color:#1a1a1a;transform:scaleX(0.92);transform-origin:0 0">Restricted Approach  - Class 2 Voltage Gloves</div>
<div class="t" style="left:16.5px;top:159.09px;font-size:6.1px;font-weight:bold;color:#1a1a1a;transform:scaleX(0.92);transform-origin:0 0">Equipment Name: BUS-8 (Fed by: R-7)</div>
</div>
</div>
<div class="a" style="left:753px;top:21px;width:11px;height:410px;background:#e9e9e9"></div>
<div class="a" style="left:753px;top:21px;width:11px;height:12px;background:#f0f0f0"></div>
<div class="a" style="left:753px;top:33px;width:11px;height:208px;background:#cdcdcd"></div>
<svg class="a" style="left:753px;top:21px" width="11" height="12"><path d="M2.8 7.6 L5.5 4.9 L8.2 7.6" fill="none" stroke="#8a8a8a" stroke-width="1.1"/></svg>
<svg class="a" style="left:753px;top:419px" width="11" height="12"><path d="M2.8 5 L5.5 7.7 L8.2 5" fill="none" stroke="#8a8a8a" stroke-width="1.1"/></svg>
<div class="a" style="left:251px;top:431px;width:502px;height:12px;background:#ececec"></div>
<div class="a" style="left:263px;top:431px;width:404.6px;height:12px;background:#cdcdcd"></div>
<svg class="a" style="left:251px;top:431px" width="12" height="12"><path d="M7.4 3.2 L4.7 6 L7.4 8.8" fill="none" stroke="#8a8a8a" stroke-width="1.1"/></svg>
<svg class="a" style="left:741px;top:431px" width="12" height="12"><path d="M4.6 3.2 L7.3 6 L4.6 8.8" fill="none" stroke="#8a8a8a" stroke-width="1.1"/></svg>
<div class="a" style="left:753px;top:431px;width:11px;height:12px;background:#ececec"></div>
</body></html>
